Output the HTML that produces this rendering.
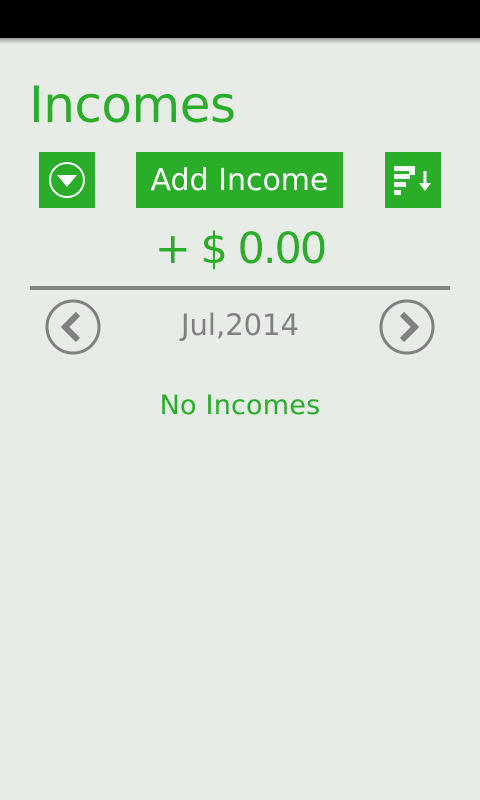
<!DOCTYPE html>
<html><head><style>
body{margin:0;width:480px;height:800px;background:#e7ece7;font-family:"DejaVu Sans","Liberation Sans",sans-serif;position:relative;overflow:hidden}
.sb{position:absolute;left:0;top:0;width:480px;height:38px;background:#000}
.sh{position:absolute;left:0;top:38px;width:480px;height:6px;background:linear-gradient(#9a9e9a,#e7ece7)}
.t{position:absolute;left:29px;top:76px;font-size:50px;color:#2aae2a;letter-spacing:-0.5px}
.b{position:absolute;top:152px;height:56px;background:#2aae2a;color:#fff}
.amt{position:absolute;left:0;width:480px;text-align:center;top:224px;font-size:43px;color:#2aae2a;letter-spacing:-2px}
.ln{position:absolute;left:30px;top:286px;width:420px;height:4px;background:#808680}
.d{position:absolute;left:0;width:480px;text-align:center;top:308px;font-size:29px;color:#808080}
.n{position:absolute;left:0;width:480px;text-align:center;top:390px;font-size:27px;color:#2aae2a;letter-spacing:0.2px}
</style></head><body>
<div class="sb"></div><div class="sh"></div>
<div class="t">Incomes</div>
<div class="b" style="left:39px;width:56px"><svg width="56" height="56"><circle cx="28" cy="28" r="17" fill="none" stroke="#fff" stroke-width="2"/><path d="M18 23 H38 L28 35 Z" fill="#fff"/></svg></div>
<div class="b" style="left:136px;width:207px;text-align:center;line-height:58px;font-size:30px">Add Income</div>
<div class="b" style="left:385px;width:56px"><svg width="56" height="56"><rect x="9" y="14" width="21" height="5" fill="#fff"/><rect x="9" y="22" width="16" height="5" fill="#fff"/><rect x="9" y="30" width="12" height="5" fill="#fff"/><rect x="9" y="38" width="7" height="5" fill="#fff"/><rect x="24" y="14" width="6" height="9" fill="#fff"/><path d="M40 19 V34" stroke="#fff" stroke-width="3"/><path d="M34 31 H46 L40 39 Z" fill="#fff"/></svg></div>
<div class="amt">+ $ 0.00</div>
<div class="ln"></div>
<svg style="position:absolute;left:45px;top:299px" width="58" height="58"><circle cx="28" cy="28" r="26" fill="none" stroke="#808080" stroke-width="3"/><path d="M33 15 L20 28 L33 41" fill="none" stroke="#808080" stroke-width="6"/></svg>
<svg style="position:absolute;left:379px;top:299px" width="58" height="58"><circle cx="28" cy="28" r="26" fill="none" stroke="#808080" stroke-width="3"/><path d="M23 15 L36 28 L23 41" fill="none" stroke="#808080" stroke-width="6"/></svg>
<div class="d">Jul,2014</div>
<div class="n">No Incomes</div>
</body></html>
